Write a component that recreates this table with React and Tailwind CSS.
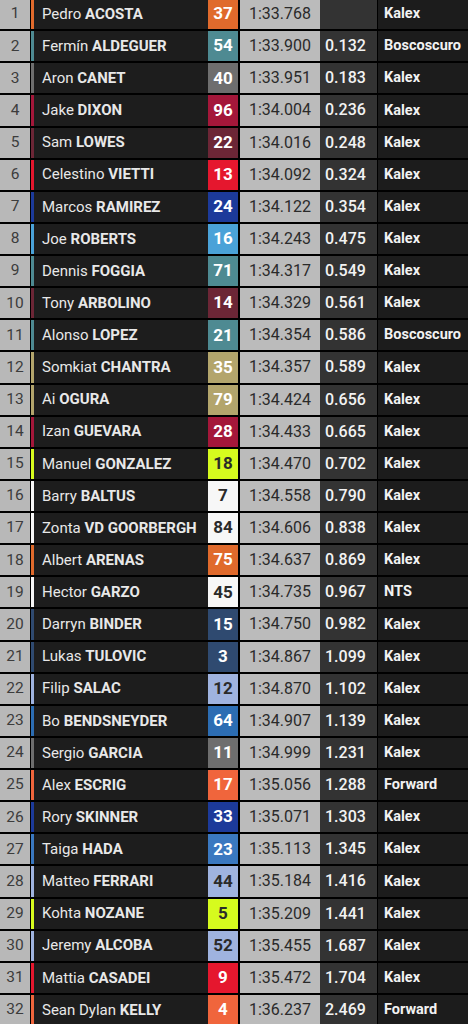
const riders = [
  { pos: 1, first: "Pedro", last: "ACOSTA", num: 37, color: "bg-[#e06a2c]", dark: false, time: "1:33.768", gap: "", team: "Kalex" },
  { pos: 2, first: "Fermín", last: "ALDEGUER", num: 54, color: "bg-[#4e8a92]", dark: false, time: "1:33.900", gap: "0.132", team: "Boscoscuro" },
  { pos: 3, first: "Aron", last: "CANET", num: 40, color: "bg-[#6e6e6e]", dark: false, time: "1:33.951", gap: "0.183", team: "Kalex" },
  { pos: 4, first: "Jake", last: "DIXON", num: 96, color: "bg-[#a4173a]", dark: false, time: "1:34.004", gap: "0.236", team: "Kalex" },
  { pos: 5, first: "Sam", last: "LOWES", num: 22, color: "bg-[#6c2636]", dark: false, time: "1:34.016", gap: "0.248", team: "Kalex" },
  { pos: 6, first: "Celestino", last: "VIETTI", num: 13, color: "bg-[#e5172e]", dark: false, time: "1:34.092", gap: "0.324", team: "Kalex" },
  { pos: 7, first: "Marcos", last: "RAMIREZ", num: 24, color: "bg-[#1c3a9a]", dark: false, time: "1:34.122", gap: "0.354", team: "Kalex" },
  { pos: 8, first: "Joe", last: "ROBERTS", num: 16, color: "bg-[#4aa2d8]", dark: false, time: "1:34.243", gap: "0.475", team: "Kalex" },
  { pos: 9, first: "Dennis", last: "FOGGIA", num: 71, color: "bg-[#4e8a92]", dark: false, time: "1:34.317", gap: "0.549", team: "Kalex" },
  { pos: 10, first: "Tony", last: "ARBOLINO", num: 14, color: "bg-[#6c2636]", dark: false, time: "1:34.329", gap: "0.561", team: "Kalex" },
  { pos: 11, first: "Alonso", last: "LOPEZ", num: 21, color: "bg-[#4e8a92]", dark: false, time: "1:34.354", gap: "0.586", team: "Boscoscuro" },
  { pos: 12, first: "Somkiat", last: "CHANTRA", num: 35, color: "bg-[#b3a56c]", dark: false, time: "1:34.357", gap: "0.589", team: "Kalex" },
  { pos: 13, first: "Ai", last: "OGURA", num: 79, color: "bg-[#b3a56c]", dark: false, time: "1:34.424", gap: "0.656", team: "Kalex" },
  { pos: 14, first: "Izan", last: "GUEVARA", num: 28, color: "bg-[#a4173a]", dark: false, time: "1:34.433", gap: "0.665", team: "Kalex" },
  { pos: 15, first: "Manuel", last: "GONZALEZ", num: 18, color: "bg-[#d6fb1e]", dark: true, time: "1:34.470", gap: "0.702", team: "Kalex" },
  { pos: 16, first: "Barry", last: "BALTUS", num: 7, color: "bg-[#f7f7f7]", dark: true, time: "1:34.558", gap: "0.790", team: "Kalex" },
  { pos: 17, first: "Zonta", last: "VD GOORBERGH", num: 84, color: "bg-[#f7f7f7]", dark: true, time: "1:34.606", gap: "0.838", team: "Kalex" },
  { pos: 18, first: "Albert", last: "ARENAS", num: 75, color: "bg-[#e06a2c]", dark: false, time: "1:34.637", gap: "0.869", team: "Kalex" },
  { pos: 19, first: "Hector", last: "GARZO", num: 45, color: "bg-[#f7f7f7]", dark: true, time: "1:34.735", gap: "0.967", team: "NTS" },
  { pos: 20, first: "Darryn", last: "BINDER", num: 15, color: "bg-[#2f4a70]", dark: false, time: "1:34.750", gap: "0.982", team: "Kalex" },
  { pos: 21, first: "Lukas", last: "TULOVIC", num: 3, color: "bg-[#2f4a70]", dark: false, time: "1:34.867", gap: "1.099", team: "Kalex" },
  { pos: 22, first: "Filip", last: "SALAC", num: 12, color: "bg-[#9fb3df]", dark: true, time: "1:34.870", gap: "1.102", team: "Kalex" },
  { pos: 23, first: "Bo", last: "BENDSNEYDER", num: 64, color: "bg-[#2c6db3]", dark: false, time: "1:34.907", gap: "1.139", team: "Kalex" },
  { pos: 24, first: "Sergio", last: "GARCIA", num: 11, color: "bg-[#6e6e6e]", dark: false, time: "1:34.999", gap: "1.231", team: "Kalex" },
  { pos: 25, first: "Alex", last: "ESCRIG", num: 17, color: "bg-[#f0653c]", dark: false, time: "1:35.056", gap: "1.288", team: "Forward" },
  { pos: 26, first: "Rory", last: "SKINNER", num: 33, color: "bg-[#1c3a9a]", dark: false, time: "1:35.071", gap: "1.303", team: "Kalex" },
  { pos: 27, first: "Taiga", last: "HADA", num: 23, color: "bg-[#3a78c0]", dark: false, time: "1:35.113", gap: "1.345", team: "Kalex" },
  { pos: 28, first: "Matteo", last: "FERRARI", num: 44, color: "bg-[#9fb3df]", dark: true, time: "1:35.184", gap: "1.416", team: "Kalex" },
  { pos: 29, first: "Kohta", last: "NOZANE", num: 5, color: "bg-[#d6fb1e]", dark: true, time: "1:35.209", gap: "1.441", team: "Kalex" },
  { pos: 30, first: "Jeremy", last: "ALCOBA", num: 52, color: "bg-[#9fb3df]", dark: true, time: "1:35.455", gap: "1.687", team: "Kalex" },
  { pos: 31, first: "Mattia", last: "CASADEI", num: 9, color: "bg-[#e5172e]", dark: false, time: "1:35.472", gap: "1.704", team: "Kalex" },
  { pos: 32, first: "Sean Dylan", last: "KELLY", num: 4, color: "bg-[#f0653c]", dark: false, time: "1:36.237", gap: "2.469", team: "Forward" },
];

const Row = ({ r }) => (
  <div className="flex h-[30.13px] shrink-0 bg-black">
    <div className="w-[30px] flex items-center justify-center bg-[#b8b8b8] text-[#3c3c3c] text-[15.5px]">
      {r.pos}
    </div>
    <div className={`ml-px w-[3px] ${r.color}`} />
    <div className="w-[174px] flex items-center pl-[8px] bg-[#1d1d1d] text-[#e8e8e8] text-[15px] whitespace-nowrap">
      {r.first}&nbsp;<span className="font-bold">{r.last}</span>
    </div>
    <div
      className={`w-[30px] flex items-center justify-center font-bold text-[17px] ${r.color} ${
        r.dark ? "text-[#2a2a2a]" : "text-white"
      }`}
    >
      {r.num}
    </div>
    <div className="ml-[2px] w-[80px] flex items-center justify-center bg-[#bbbbbb] text-[#2a2a2a] text-[16px]">
      {r.time}
    </div>
    <div className="w-[57px] flex items-center pl-[5px] bg-[#333333] text-[#f2f2f2] font-medium text-[16px]">
      {r.gap}
    </div>
    <div className="ml-px flex-1 flex items-center pl-[6px] bg-[#1c1c1c] text-[#f2f2f2] font-bold text-[14.5px]">
      {r.team}
    </div>
  </div>
);

export default function App() {
  return (
    <div className="w-[468px] h-[1024px] overflow-hidden bg-black font-['Roboto',sans-serif]">
      <div className="flex flex-col gap-[2px] -mt-[1px]">
        {riders.map((r) => (
          <Row key={r.pos} r={r} />
        ))}
      </div>
    </div>
  );
}
